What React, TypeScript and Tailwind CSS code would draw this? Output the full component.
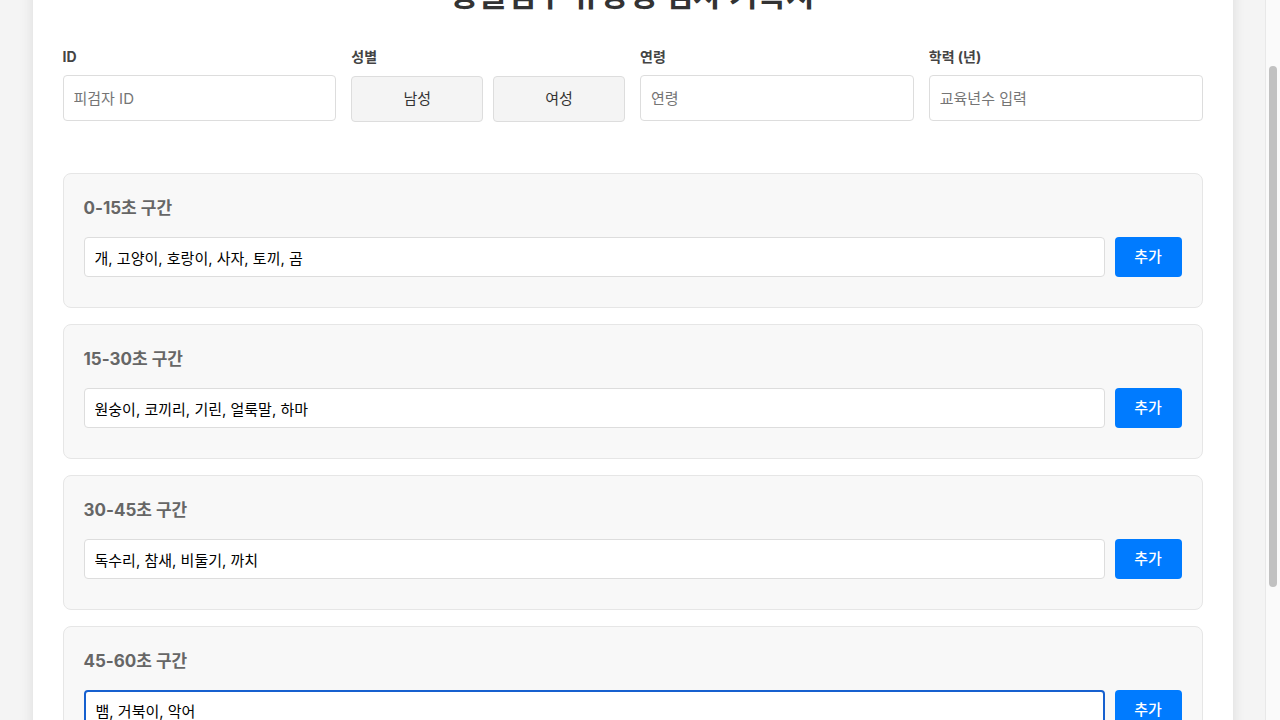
import { useLayoutEffect, useRef, useState } from 'react';

const FONT = { fontFamily: '"Inter", "Noto Sans CJK KR", "Noto Sans", sans-serif' };

interface Segment {
  label: string;
  words: string;
}

const initialSegments: Segment[] = [
  { label: '0-15초 구간', words: '개, 고양이, 호랑이, 사자, 토끼, 곰' },
  { label: '15-30초 구간', words: '원숭이, 코끼리, 기린, 얼룩말, 하마' },
  { label: '30-45초 구간', words: '독수리, 참새, 비둘기, 까치' },
  { label: '45-60초 구간', words: '뱀, 거북이, 악어' },
];

function Field({ label, children }: { label: string; children: React.ReactNode }) {
  return (
    <div className="flex flex-col">
      <label className="mb-[8px] text-[14px] leading-[20px] font-bold text-[#444]">{label}</label>
      {children}
    </div>
  );
}

export default function App() {
  const scrollRef = useRef<HTMLDivElement>(null);
  const [segments, setSegments] = useState(initialSegments);
  const [gender, setGender] = useState<string | null>(null);

  useLayoutEffect(() => {
    // page was captured slightly scrolled down
    if (scrollRef.current) scrollRef.current.scrollTop = 91;
  }, []);

  const update = (i: number, words: string) => {
    setSegments(segments.map((s, idx) => (idx === i ? { ...s, words } : s)));
  };

  return (
    <div className="flex h-screen bg-[#f4f4f4]" style={FONT}>
      <div ref={scrollRef} className="flex-1 overflow-y-auto [scrollbar-width:none]">
        <div className="py-[20px]">
          <div className="mx-auto max-w-[1200px] bg-white px-[30px] pt-[48px] pb-[30px] shadow-[0_0_12px_rgba(0,0,0,0.1)]">
            <h1 className="mb-[34px] text-center text-[31px] leading-[36px] font-bold text-[#333]">
              동물범주 유창성 검사 기록지
            </h1>

            <div className="grid grid-cols-4 gap-[15px]">
              <Field label="ID">
                <input
                  placeholder="피검자 ID"
                  className="h-[46px] rounded-[4px] border border-[#ddd] bg-white px-[10px] text-[15px] text-[#222] placeholder:text-[#757575] outline-none"
                />
              </Field>
              <Field label="성별">
                <div className="flex gap-[10px] pt-[1px]">
                  {['남성', '여성'].map((g) => (
                    <button
                      key={g}
                      onClick={() => setGender(g)}
                      className={`h-[46px] flex-1 rounded-[4px] border text-[15px] text-[#333] ${gender === g ? 'border-[#007bff] bg-[#e7f1ff]' : 'border-[#ddd] bg-[#f4f4f4]'}`}
                    >
                      {g}
                    </button>
                  ))}
                </div>
              </Field>
              <Field label="연령">
                <input
                  placeholder="연령"
                  className="h-[46px] rounded-[4px] border border-[#ddd] bg-white px-[10px] text-[15px] text-[#222] placeholder:text-[#757575] outline-none"
                />
              </Field>
              <Field label="학력 (년)">
                <input
                  placeholder="교육년수 입력"
                  className="h-[46px] rounded-[4px] border border-[#ddd] bg-white px-[10px] text-[15px] text-[#222] placeholder:text-[#757575] outline-none"
                />
              </Field>
            </div>

            <div className="mt-[51px] flex flex-col gap-[16px]">
              {segments.map((s, i) => (
                <div key={s.label} className="rounded-[8px] border border-[#e6e6e6] bg-[#f8f8f8] px-[20px] pt-[20px] pb-[30px]">
                  <h3 className="mb-[15px] text-[17px] leading-[28px] font-bold text-[#666]">{s.label}</h3>
                  <div className="flex gap-[10px]">
                    <input
                      value={s.words}
                      onChange={(e) => update(i, e.target.value)}
                      className={`h-[40px] flex-1 rounded-[4px] bg-white px-[10px] text-[15px] text-black outline-none ${i === 3 ? 'border-2 border-[#1660cf] px-[9px]' : 'border border-[#ddd]'}`}
                    />
                    <button className="h-[40px] w-[67px] rounded-[4px] bg-[#007bff] text-[15px] font-medium text-white">
                      추가
                    </button>
                  </div>
                </div>
              ))}
            </div>

            <div className="mt-[30px] flex justify-center">
              <button className="h-[50px] w-[200px] rounded-[4px] bg-[#28a745] text-[16px] font-bold text-white">
                결과 저장
              </button>
            </div>
          </div>
        </div>
      </div>

      {/* page scrollbar */}
      <div className="w-[15px] shrink-0 border-l border-[#e8e8e8] bg-[#fafafa]">
        <div className="mx-auto mt-[66px] h-[521px] w-[8px] rounded-full bg-[#c1c1c1]" />
      </div>
    </div>
  );
}
